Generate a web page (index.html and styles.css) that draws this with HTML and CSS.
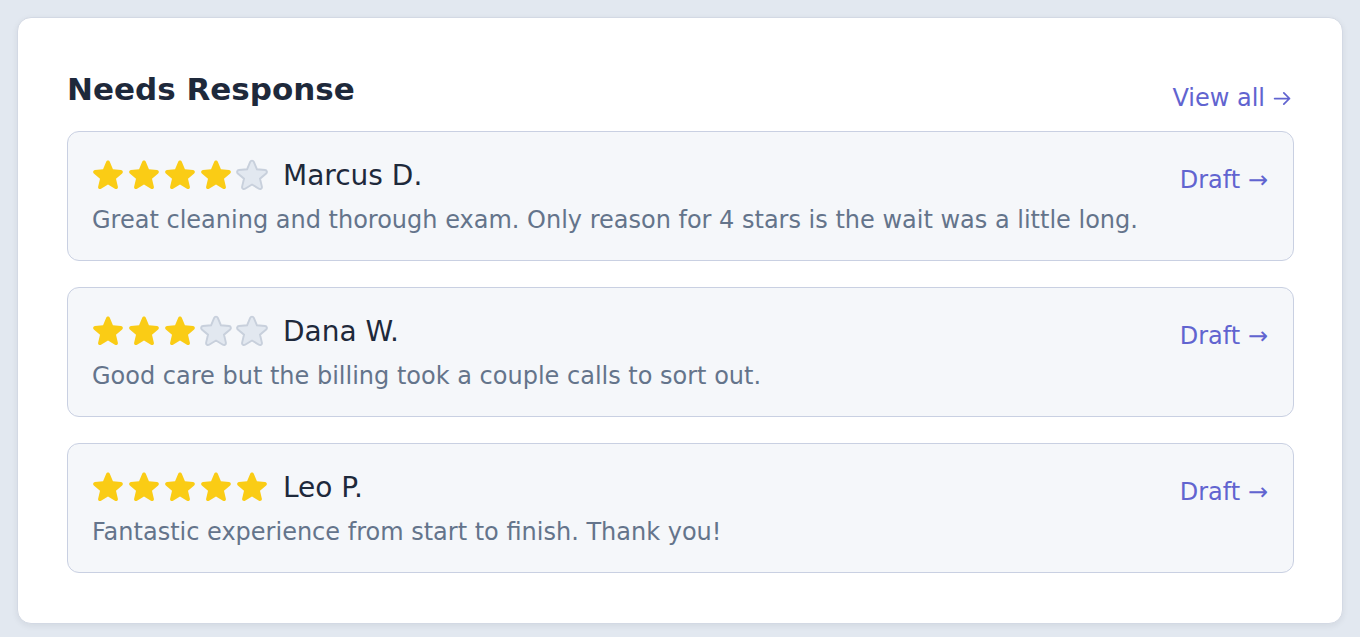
FILE: index.html
```html
<!DOCTYPE html>
<html lang="en">
<head>
  <meta charset="UTF-8">
  <meta name="viewport" content="width=device-width, initial-scale=1.0">
  <title>Needs Response</title>
  <link rel="stylesheet" href="styles.css">
</head>
<body>
  <svg width="0" height="0" class="defs">
    <defs>
      <path id="star" d="M10.788 3.21c.448-1.077 1.976-1.077 2.424 0l2.082 5.006 5.404.434c1.164.093 1.636 1.545.749 2.305l-4.117 3.527 1.257 5.273c.271 1.136-.964 2.033-1.96 1.425L12 18.354 7.373 21.18c-.996.608-2.231-.29-1.960-1.425l1.257-5.273-4.117-3.527c-.887-.76-.415-2.212.749-2.305l5.404-.434 2.082-5.005z"/>
    </defs>
  </svg>

  <section class="panel">
    <header class="panel-header">
      <h2>Needs Response</h2>
      <a href="#" class="view-all">View all
        <svg class="arrow" viewBox="0 0 24 24"><path d="M3 12h17M13.5 5.5L20 12l-6.5 6.5"/></svg>
      </a>
    </header>

    <div class="review-list">
      <div class="review">
        <div class="review-body">
          <div class="review-top">
            <div class="stars">
              <svg class="star on" viewBox="0 0 24 24"><use href="#star"/></svg>
              <svg class="star on" viewBox="0 0 24 24"><use href="#star"/></svg>
              <svg class="star on" viewBox="0 0 24 24"><use href="#star"/></svg>
              <svg class="star on" viewBox="0 0 24 24"><use href="#star"/></svg>
              <svg class="star off" viewBox="0 0 24 24"><use href="#star"/></svg>
            </div>
            <span class="reviewer">Marcus D.</span>
          </div>
          <p class="review-text">Great cleaning and thorough exam. Only reason for 4 stars is the wait was a little long.</p>
        </div>
        <a href="#" class="draft">Draft →</a>
      </div>

      <div class="review">
        <div class="review-body">
          <div class="review-top">
            <div class="stars">
              <svg class="star on" viewBox="0 0 24 24"><use href="#star"/></svg>
              <svg class="star on" viewBox="0 0 24 24"><use href="#star"/></svg>
              <svg class="star on" viewBox="0 0 24 24"><use href="#star"/></svg>
              <svg class="star off" viewBox="0 0 24 24"><use href="#star"/></svg>
              <svg class="star off" viewBox="0 0 24 24"><use href="#star"/></svg>
            </div>
            <span class="reviewer">Dana W.</span>
          </div>
          <p class="review-text">Good care but the billing took a couple calls to sort out.</p>
        </div>
        <a href="#" class="draft">Draft →</a>
      </div>

      <div class="review">
        <div class="review-body">
          <div class="review-top">
            <div class="stars">
              <svg class="star on" viewBox="0 0 24 24"><use href="#star"/></svg>
              <svg class="star on" viewBox="0 0 24 24"><use href="#star"/></svg>
              <svg class="star on" viewBox="0 0 24 24"><use href="#star"/></svg>
              <svg class="star on" viewBox="0 0 24 24"><use href="#star"/></svg>
              <svg class="star on" viewBox="0 0 24 24"><use href="#star"/></svg>
            </div>
            <span class="reviewer">Leo P.</span>
          </div>
          <p class="review-text">Fantastic experience from start to finish. Thank you!</p>
        </div>
        <a href="#" class="draft">Draft →</a>
      </div>
    </div>
  </section>
</body>
</html>
```

FILE: styles.css
```css
:root {
  --page: #e2e8f0;
  --border: #c9d0e2;
  --ink: #1e293b;
  --muted: #64748b;
  --link: #6164d0;
  --gold: #facc15;
}

* {
  margin: 0;
  padding: 0;
  box-sizing: border-box;
}

body {
  font-family: 'DejaVu Sans', 'Noto Sans', sans-serif;
  background: var(--page);
  color: var(--ink);
  padding: 17px 17px 14px 17px;
}

.defs {
  position: absolute;
}

.panel {
  background: white;
  border: 1px solid #d3d9e4;
  border-radius: 14px;
  box-shadow: 0 2px 6px rgba(15, 23, 42, 0.07);
  padding: 52px 48px 50px 49px;
}

.panel-header {
  display: flex;
  justify-content: space-between;
  align-items: flex-end;
  margin-bottom: 23px;
}

.panel-header h2 {
  font-size: 31px;
  font-weight: 700;
  line-height: 38px;
  color: var(--ink);
}

.view-all {
  display: flex;
  align-items: center;
  gap: 7px;
  color: var(--link);
  text-decoration: none;
  font-size: 24px;
  line-height: 30px;
  margin-right: 1px;
  margin-bottom: -5px;
}

.arrow {
  width: 21px;
  height: 21px;
  fill: none;
  stroke: currentColor;
  stroke-width: 2;
  stroke-linecap: round;
  stroke-linejoin: round;
}

.review-list {
  display: flex;
  flex-direction: column;
  gap: 26px;
}

.review {
  display: flex;
  justify-content: space-between;
  align-items: flex-start;
  background: #f5f7fa;
  border: 1.5px solid var(--border);
  border-radius: 12px;
  padding: 23px 25px 23px 22px;
  height: 130px;
}

.review-top {
  display: flex;
  align-items: center;
  gap: 13px;
  height: 40px;
}

.stars {
  display: flex;
}

.star {
  width: 36px;
  height: 36px;
}

.star.on {
  fill: var(--gold);
}

.star.off {
  fill: #e2e8f0;
  stroke: #c8d0dc;
  stroke-width: 1.3;
}

.reviewer {
  font-size: 28px;
  color: var(--ink);
}

.review-text {
  margin-top: 8px;
  margin-left: 2px;
  font-size: 24px;
  line-height: 34px;
  color: var(--muted);
}

.draft {
  color: var(--link);
  text-decoration: none;
  font-size: 24px;
  line-height: 34px;
  margin-top: 8px;
}
```
